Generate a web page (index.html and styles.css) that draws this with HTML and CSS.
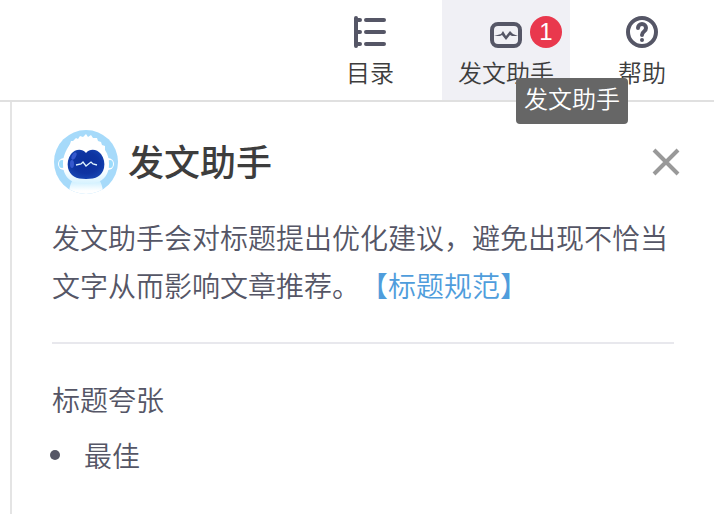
FILE: index.html
```html
<!DOCTYPE html>
<html lang="zh-CN">
<head>
  <meta charset="UTF-8">
  <meta name="viewport" content="width=device-width, initial-scale=1.0">
  <title>发文助手</title>
  <link rel="stylesheet" href="styles.css">
</head>
<body>
  <header class="toolbar">
    <button class="tool" type="button">
      <svg class="tool-icon" viewBox="0 0 32 32" fill="none" stroke="#555666" stroke-width="4" stroke-linecap="round">
        <path d="M2 2v28M2 4h4M2 16h4M2 28h4M12 4h18M12 16h18M12 28h18"/>
      </svg>
      <span>目录</span>
    </button>
    <button class="tool active" type="button" aria-describedby="helper-tip">
      <svg class="tool-icon" viewBox="0 0 32 32" fill="none" stroke="#555666">
        <rect x="2" y="8" width="28" height="22" rx="6" stroke-width="4"/>
        <path d="M4 20l7-2 2-3 3 5 4-5 3 3 5 2-6 0-2-1-4 5-4-5-2 1z" fill="#555666" stroke="none"/>
      </svg>
      <span>发文助手</span>
      <span class="badge">1</span>
      <span class="tooltip" id="helper-tip" role="tooltip">发文助手</span>
    </button>
    <button class="tool" type="button">
      <svg class="tool-icon" viewBox="0 0 32 32" fill="none" stroke="#555666" stroke-width="4">
        <circle cx="16" cy="16" r="14"/>
        <path d="M12 12a4 4 0 0 1 8 0c0 4-4 3-4 7" stroke-linecap="round"/>
        <circle cx="16" cy="24" r="2" fill="#555666" stroke="none"/>
      </svg>
      <span>帮助</span>
    </button>
  </header>

  <main class="panel">
    <div class="panel-head">
      <svg class="avatar" viewBox="0 0 64 64">
        <defs>
          <clipPath id="round"><circle cx="32" cy="32" r="32"/></clipPath>
          <radialGradient id="face" cx="50%" cy="45%" r="60%">
            <stop offset="0" stop-color="#0b2f9c"/>
            <stop offset="0.6" stop-color="#0e34a2"/>
            <stop offset="1" stop-color="#1747b4"/>
          </radialGradient>
          <linearGradient id="fur" x1="0" y1="0" x2="0" y2="1">
            <stop offset="0.7" stop-color="#fff"/>
            <stop offset="1" stop-color="#d5f2ff"/>
          </linearGradient>
          <linearGradient id="chest" x1="0" y1="0" x2="0" y2="1">
            <stop offset="0.3" stop-color="#d5f2ff"/>
            <stop offset="0.8" stop-color="#fff"/>
          </linearGradient>
        </defs>
        <g clip-path="url(#round)">
          <rect width="64" height="64" fill="#a6dafa"/>
          <path d="M15 64c0-7 2-12 5-16h24c3 4 5 9 5 16z" fill="url(#chest)"/>
          <circle cx="10" cy="34" r="6" fill="#fff"/>
          <circle cx="54" cy="34" r="6" fill="#fff"/>
          <ellipse cx="8" cy="34" rx="3" ry="4" fill="#9bdcfc"/>
          <ellipse cx="56" cy="34" rx="3" ry="4" fill="#9bdcfc"/>
          <path d="M9 34c0-7 2-11 4-15l3-5 1-3 2 0 3-3 2 1 2-3 3 1 3-3 2 3 3-2 2 3 4 0 1 3 3 1 1 3 3 1 0 4c3 4 4 9 4 14 0 14-9 20-23 20S9 48 9 34z" fill="url(#fur)"/>
          <path d="M32 23c4-5 11-4 15 1 3 4 4 9 3 14-2 8-8 11-18 11s-16-3-18-11c-1-5 0-10 3-14 4-5 11-6 15-1z" fill="url(#face)"/>
          <ellipse cx="20" cy="26" rx="2" ry="4" fill="#3558cd" transform="rotate(28 20 26)"/>
          <ellipse cx="18" cy="34" rx="2" ry="4" fill="#3558cd"/>
          <path d="M22 35l5-1 2-2 3 4 5-4 2 2 4 1" fill="none" stroke="#dff4ff" stroke-width="1.3"/>
        </g>
      </svg>
      <h1>发文助手</h1>
      <button class="close" type="button" aria-label="关闭">
        <svg viewBox="0 0 28 28" fill="none" stroke="#999" stroke-width="4">
          <path d="M2 2l24 24M26 2L2 26"/>
        </svg>
      </button>
    </div>
    <p class="intro">发文助手会对标题提出优化建议，避免出现不恰当文字从而影响文章推荐。<a href="#">【标题规范】</a></p>
    <section class="result">
      <h2>标题夸张</h2>
      <ul>
        <li>最佳</li>
      </ul>
    </section>
  </main>
</body>
</html>
```
FILE: styles.css
```css
* {
  box-sizing: border-box;
}
body {
  display: flex;
  flex-direction: column;
  min-height: 100vh;
  margin: 0;
  background-color: #fff;
  color: #555666;
  font-family: "Noto Sans CJK SC", sans-serif;
  font-weight: 350;
  text-spacing-trim: space-all;
}
button {
  padding: 0;
  border: none;
  background: none;
  font-family: inherit;
  cursor: pointer;
}
.toolbar {
  display: flex;
  justify-content: flex-end;
  gap: 32px;
  padding-right: 32px;
  border-bottom: 2px solid #e0e0e0;
}
.tool {
  position: relative;
  display: flex;
  flex-direction: column;
  align-items: center;
  gap: 6px;
  padding: 16px 16px 10px;
  color: #3d3d3d;
  font-size: 24px;
  font-weight: 350;
  line-height: 36px;
}
.tool.active {
  z-index: 1;
  background-color: #f0f0f5;
}
.tool-icon {
  display: block;
  width: 32px;
  height: 32px;
}
.badge {
  position: absolute;
  top: 16px;
  right: 8px;
  width: 32px;
  height: 32px;
  border-radius: 50%;
  background-color: #e9384d;
  color: #fff;
  font-family: "Liberation Sans", Arial, sans-serif;
  line-height: 32px;
}
.tooltip {
  position: absolute;
  top: 78px;
  left: 74px;
  padding: 2px 8px 8px;
  border-radius: 4px;
  background-color: #666;
  color: #fff;
  white-space: nowrap;
}
.panel {
  flex: 1;
  margin-left: 10px;
  padding: 24px 40px;
  border-left: 2px solid #e4e4e4;
}
.panel-head {
  display: flex;
  align-items: center;
  gap: 10px;
  height: 72px;
  padding-left: 2px;
}
.avatar {
  width: 64px;
  height: 64px;
}
h1 {
  margin: 0;
  padding-bottom: 4px;
  color: #3d3d3d;
  font-size: 36px;
  font-weight: 500;
  line-height: 48px;
}
.close {
  width: 28px;
  height: 28px;
  margin-left: auto;
  margin-right: -6px;
}
.close svg {
  display: block;
}
.intro {
  margin: 15px 0 0;
  padding-bottom: 33px;
  border-bottom: 2px solid #e8e8ed;
  font-size: 28px;
  line-height: 48px;
}
.intro a {
  color: #4f9ddc;
  text-decoration: none;
}
.result {
  padding-top: 31px;
  font-size: 28px;
  line-height: 48px;
}
.result h2 {
  margin: 0 0 8px;
  font-size: 28px;
  font-weight: 350;
}
.result ul {
  margin: 0;
  padding: 0;
  list-style: none;
}
.result li {
  display: flex;
  align-items: center;
  gap: 24px;
  margin-left: -2px;
}
.result li::before {
  content: "";
  width: 10px;
  height: 10px;
  border-radius: 50%;
  background-color: #555666;
}
```
